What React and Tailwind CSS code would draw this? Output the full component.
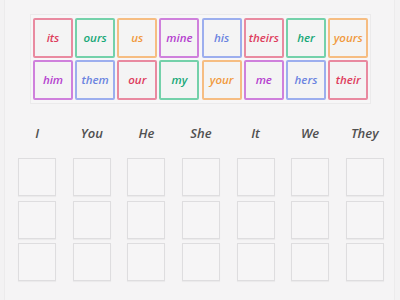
import React from "react";

const COLORS = {
  red: { text: "text-[#de3d5d]", border: "border-[#e98aa0]" },
  green: { text: "text-[#17a878]", border: "border-[#74d1aa]" },
  orange: { text: "text-[#f19a3e]", border: "border-[#f6bd82]" },
  purple: { text: "text-[#b53fcf]", border: "border-[#cf80dc]" },
  blue: { text: "text-[#6b84e0]", border: "border-[#9caeee]" },
};

const tiles = [
  ["its", "red"],
  ["ours", "green"],
  ["us", "orange"],
  ["mine", "purple"],
  ["his", "blue"],
  ["theirs", "red"],
  ["her", "green"],
  ["yours", "orange"],
  ["him", "purple"],
  ["them", "blue"],
  ["our", "red"],
  ["my", "green"],
  ["your", "orange"],
  ["me", "purple"],
  ["hers", "blue"],
  ["their", "red"],
];

const headers = ["I", "You", "He", "She", "It", "We", "They"];

export default function App() {
  return (
    <main
      className="w-[400px] h-[300px] bg-[#f3f2f3] overflow-hidden"
      style={{ fontFamily: "'Open Sans', 'DejaVu Sans', sans-serif" }}
    >
      <div className="mx-[4px] w-[391px] h-[300px] bg-[#f5f4f5] border-x border-[#ecebec] pt-[14px]">
        {/* WORD TILES */}
        <div className="ml-[25px] w-[341px] h-[90px] bg-[#f7f6f7] border border-[#ebeaeb] px-[2px] py-[3px] grid grid-cols-8 gap-x-[2.3px] gap-y-[2px]">
          {tiles.map(([word, c]) => (
            <div
              key={word}
              className={`h-[40px] w-[40px] flex items-center justify-center border-2 rounded-[2px] bg-[#f4f4f4] ${COLORS[c].border}`}
            >
              <span className={`text-[11.5px] font-semibold italic ${COLORS[c].text}`}>
                {word}
              </span>
            </div>
          ))}
        </div>

        {/* DROP COLUMNS */}
        <div className="ml-[5px] w-[382px] mt-[20px] grid grid-cols-7">
          {headers.map((h) => (
            <div key={h} className="flex flex-col items-center">
              <div className="h-[20px] flex items-center text-[13px] italic font-semibold text-[#505050]">
                {h}
              </div>
              <div className="mt-[14px] flex flex-col gap-[4.5px]">
                {[0, 1, 2].map((i) => (
                  <div
                    key={i}
                    className="w-[38px] h-[38px] border border-[#dedddf] bg-[#f6f5f6] shadow-[0_1px_1px_rgba(0,0,0,0.04)]"
                  />
                ))}
              </div>
            </div>
          ))}
        </div>
      </div>
    </main>
  );
}
